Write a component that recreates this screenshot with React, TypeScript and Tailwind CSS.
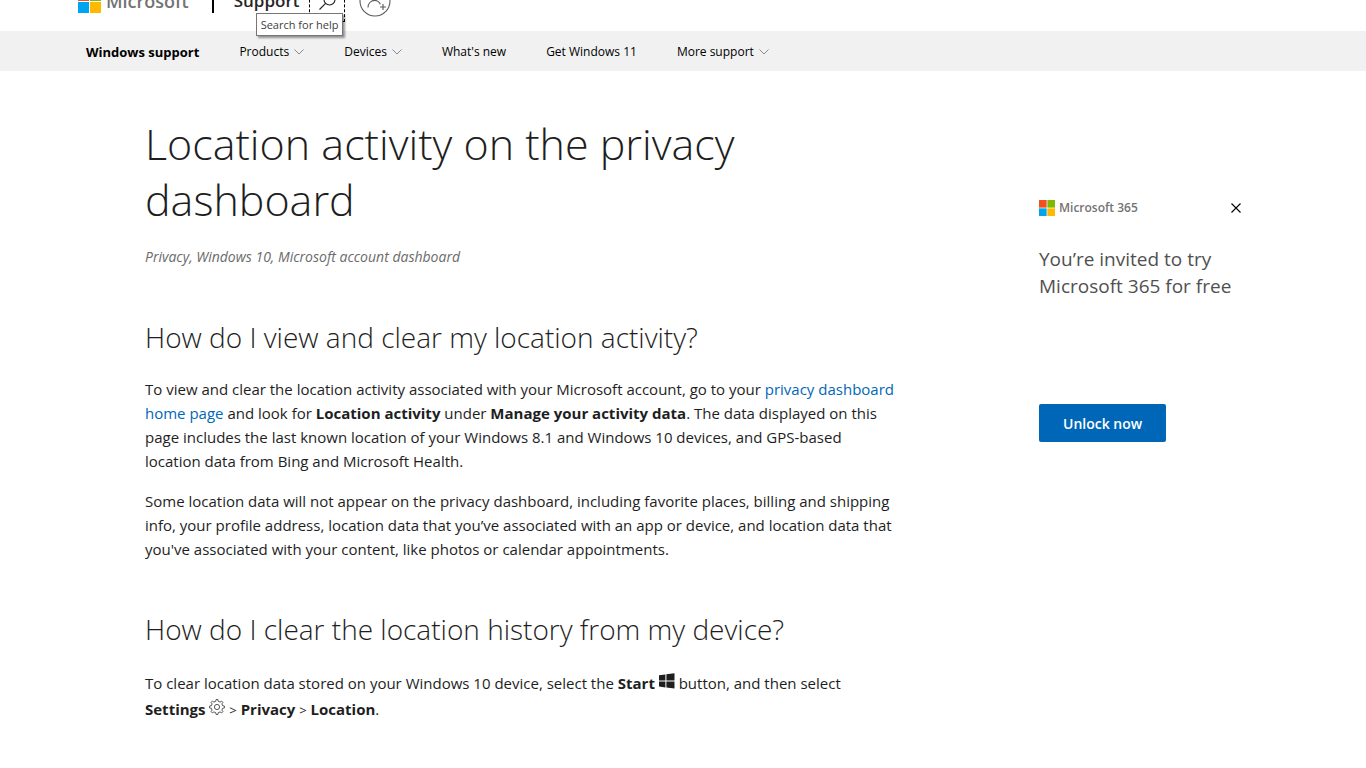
import React from 'react';

interface NavItem {
    label: string;
    hasMenu: boolean;
}

const NAV_ITEMS: NavItem[] = [
    { label: 'Products', hasMenu: true },
    { label: 'Devices', hasMenu: true },
    { label: "What's new", hasMenu: false },
    { label: 'Get Windows 11', hasMenu: false },
    { label: 'More support', hasMenu: true }
];

const MicrosoftMark: React.FC<{ className: string }> = ({ className }) => (
    <svg viewBox="0 0 23 23" className={className} aria-hidden="true">
        <path fill="#f25022" d="M0 0h11v11H0z" />
        <path fill="#7fba00" d="M12 0h11v11H12z" />
        <path fill="#00a4ef" d="M0 12h11v11H0z" />
        <path fill="#ffb900" d="M12 12h11v11H12z" />
    </svg>
);

const SearchIcon: React.FC = () => (
    <svg viewBox="0 0 18 18" className="w-[18px] h-[18px]" fill="none" stroke="#1f1f1f" strokeWidth="1.1" aria-hidden="true">
        <circle cx="11.500" cy="7.500" r="5.500" />
        <path d="M7.600 11.400 1.500 17.500" />
    </svg>
);

const AccountIcon: React.FC = () => (
    <svg viewBox="0 0 32 32" className="w-8 h-8" fill="none" stroke="#5a5a5a" strokeWidth="1.1" aria-hidden="true">
        <circle cx="16" cy="16" r="15" />
        <circle cx="15.500" cy="11" r="4.500" />
        <path d="M9 22.500c0-4 2.800-7 6.500-7 2.600 0 4.800 1.500 5.800 3.800M21 22h6M24 19v6" />
    </svg>
);

const ChevronIcon: React.FC = () => (
    <svg viewBox="0 0 10 6" className="w-[10px] h-[6px]" fill="none" stroke="#8a8a8a" aria-hidden="true">
        <path d="M.5.500 5 5 9.500.5" />
    </svg>
);

const CloseIcon: React.FC = () => (
    <svg viewBox="0 0 12 12" className="w-3 h-3" fill="none" stroke="#000" strokeWidth="1.1" aria-hidden="true">
        <path d="M1.500 1.500l9 9M10.500 1.500l-9 9" />
    </svg>
);

const WindowsIcon: React.FC = () => (
    <svg viewBox="0 0 16 16" className="inline-block w-4 h-4 align-baseline" fill="#1e1e1e" aria-label="Start button">
        <path d="M0 2.200 6.400 1.400v6H0zM7.400 1.300 15.500.2v7.200H7.400zM0 8.400h6.400v6L0 13.600zM7.400 8.400h8.100v7.200l-8.100-1.100z" />
    </svg>
);

const GEAR_TEETH = 8;

// Outline of the cog: each tooth is two outer points followed by two inner ones.
const gearPoints = Array.from({ length: GEAR_TEETH * 4 }, (_, i) => {
    const offsets = [-0.16, 0.16, 0.28, 0.72];
    const angle = ((Math.floor(i / 4) + offsets[i % 4]) / GEAR_TEETH) * Math.PI * 2;
    const radius = i % 4 < 2 ? 7.5 : 5.8;
    return `${8 + radius * Math.sin(angle)},${8 - radius * Math.cos(angle)}`;
}).join(' ');

const GearIcon: React.FC = () => (
    <svg viewBox="0 0 16 16" className="inline-block w-4 h-4 align-baseline" fill="none" stroke="#444" strokeWidth="0.9" strokeLinejoin="round" aria-label="Settings icon">
        <polygon points={gearPoints} />
        <circle cx="8" cy="8" r="2.6" />
    </svg>
);

const SiteHeader: React.FC = () => (
    <header className="-mt-[29px] h-[60px] pl-[78px] flex items-center bg-white">
        <a href="#" className="flex items-center gap-[5px]">
            <MicrosoftMark className="w-[23px] h-[23px]" />
            <span className="text-[18px] leading-6 font-semibold text-[#737373]">Microsoft</span>
        </a>
        <span className="ml-[23px] w-[2px] h-6 bg-black" />
        <a href="#" className="ml-5 text-[17px] leading-6 font-semibold text-[#262626]">Support</a>
        <div className="relative ml-[10px]">
            <button type="button" aria-label="Search for help" className="w-9 h-[42px] flex items-center justify-center border border-dashed border-black">
                <SearchIcon />
            </button>
            <span role="tooltip" className="absolute right-[2px] top-[33px] px-1 h-[23px] border border-[#767676] bg-white text-[11px] leading-[21px] text-[#404040] whitespace-nowrap shadow-[2px_2px_2px_rgba(0,0,0,0.4)]">
                Search for help
            </span>
        </div>
        <button type="button" aria-label="Sign in to your account" className="ml-[14px]">
            <AccountIcon />
        </button>
    </header>
);

const SupportNav: React.FC = () => (
    <nav className="h-10 pt-[2px] pl-[86px] flex items-center gap-10 bg-[#f1f1f1] text-[12px] leading-5 text-black">
        <a href="#" className="text-[13px] font-bold">Windows support</a>
        {NAV_ITEMS.map((item) =>
            item.hasMenu ? (
                <button key={item.label} type="button" className="flex items-center gap-[5px]">
                    {item.label}
                    <ChevronIcon />
                </button>
            ) : (
                <a key={item.label} href="#">{item.label}</a>
            )
        )}
    </nav>
);

const Article: React.FC = () => (
    <article className="w-[756px] text-[15px] leading-6 text-[#1e1e1e]">
        <h1 className="max-w-[640px] text-[43px] leading-[56px] font-light">Location activity on the privacy dashboard</h1>
        <p className="mt-[19px] text-[14px] leading-5 italic text-[#6b6b6b]">Privacy, Windows 10, Microsoft account dashboard</p>

        <h2 className="mt-[50px] text-[28px] leading-10 font-light">How do I view and clear my location activity?</h2>
        <p className="mt-5">
            To view and clear the location activity associated with your Microsoft account, go to your{' '}
            <a href="#" className="text-[#0067b8]">privacy dashboard home page</a> and look for <b>Location activity</b> under{' '}
            <b>Manage your activity data</b>. The data displayed on this page includes the last known location of your Windows 8.1 and
            Windows 10 devices, and GPS-based location data from Bing and Microsoft Health.
        </p>
        <p className="mt-4">
            Some location data will not appear on the privacy dashboard, including favorite places, billing and shipping info, your
            profile address, location data that you’ve associated with an app or device, and location data that you've associated with
            your content, like photos or calendar appointments.
        </p>

        <h2 className="mt-12 text-[28px] leading-10 font-light">How do I clear the location history from my device?</h2>
        <p className="mt-[21px] leading-[26px]">
            To clear location data stored on your Windows 10 device, select the <b>Start</b> <WindowsIcon /> button, and then select{' '}
            <b>Settings</b> <GearIcon /> <span className="text-[13px]">&gt;</span> <b>Privacy</b>{' '}
            <span className="text-[13px]">&gt;</span> <b>Location</b>.
        </p>
    </article>
);

const TrialOffer: React.FC = () => (
    <aside className="mt-[82px] w-[203px] flex flex-col items-start">
        <div className="w-full h-5 flex items-center justify-between">
            <div className="flex items-center gap-1">
                <MicrosoftMark className="w-4 h-4" />
                <span className="text-[12px] leading-5 font-semibold text-[#737373]">Microsoft 365</span>
            </div>
            <button type="button" aria-label="Close">
                <CloseIcon />
            </button>
        </div>
        <p className="mt-7 text-[19px] leading-[27px] text-[#505050]">You’re invited to try Microsoft 365 for free</p>
        <button type="button" className="mt-[104px] h-[38px] px-6 rounded-[2px] bg-[#0067b8] text-[14px] font-semibold text-white">
            Unlock now
        </button>
    </aside>
);

export default function App() {
    return (
        <div className="bg-white font-['Open_Sans','Noto_Sans',sans-serif]">
            <SiteHeader />
            <SupportNav />
            <main className="pt-[45px] pl-[145px] pr-[124px] flex items-start justify-between">
                <Article />
                <TrialOffer />
            </main>
        </div>
    );
}
